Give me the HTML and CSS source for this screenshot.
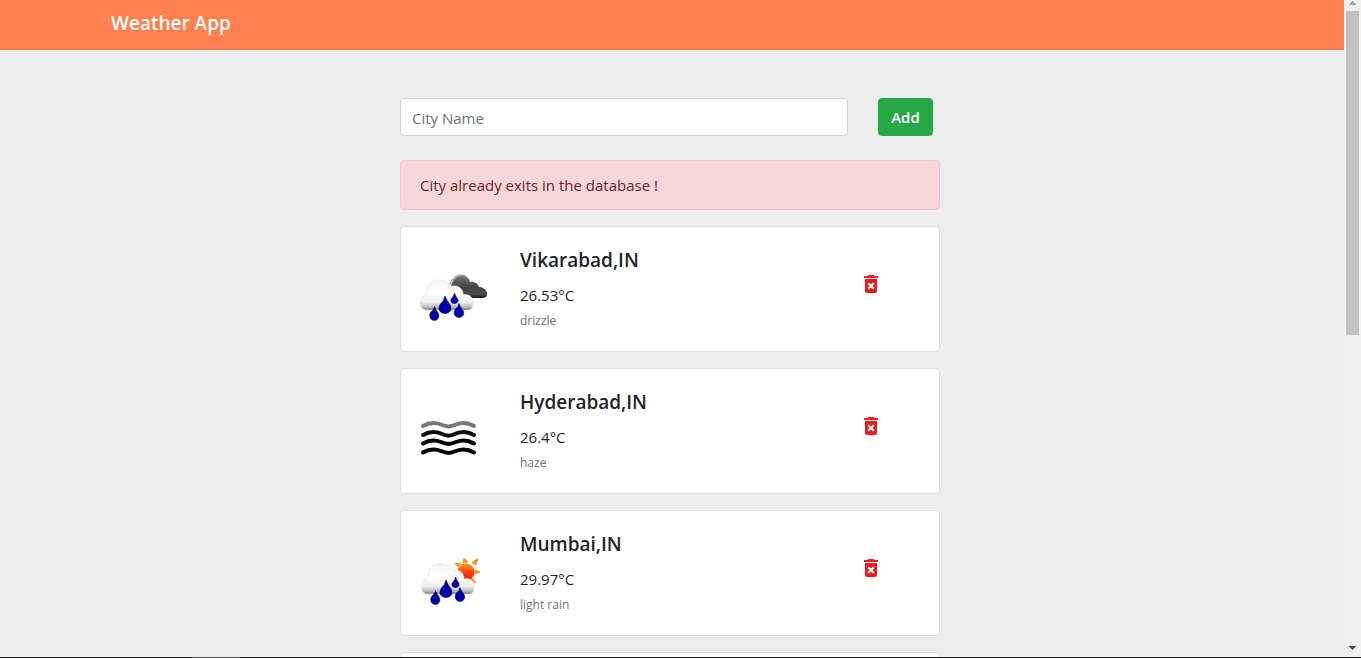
FILE: index.html
```html
<!DOCTYPE html>
<html lang="en">
<head>
<meta charset="utf-8">
<title>Weather App</title>
<link rel="stylesheet" href="styles.css">
</head>
<body>
<svg class="defs" aria-hidden="true">
  <defs>
    <linearGradient id="cloud" x1="0" y1="0" x2="0" y2="1"><stop offset="0" stop-color="#f4f4f4"/><stop offset=".45" stop-color="#fff"/><stop offset=".75" stop-color="#ededed"/><stop offset=".92" stop-color="#b4b4b4"/><stop offset="1" stop-color="#666"/></linearGradient>
    <linearGradient id="dark" x1="0" y1="0" x2="0" y2="1"><stop offset="0" stop-color="#777"/><stop offset=".5" stop-color="#444"/><stop offset=".85" stop-color="#484848"/><stop offset="1" stop-color="#111"/></linearGradient>
    <linearGradient id="sun" x1="0" y1="0" x2="0" y2="1"><stop offset="0" stop-color="#ff9a20"/><stop offset=".55" stop-color="#ff3a0a"/><stop offset="1" stop-color="#ff1000"/></linearGradient>
    <radialGradient id="drop" cx=".5" cy=".65" r=".55"><stop offset="0" stop-color="#0000d0"/><stop offset="1" stop-color="#000070"/></radialGradient>
    <filter id="soft" x="-10%" y="-10%" width="120%" height="120%"><feGaussianBlur stdDeviation=".7"/></filter>
    <g id="rain">
      <path fill="url(#cloud)" stroke="#e4e4e4" stroke-width=".6" d="M16 45C10 44 9 38 11 34C12 31 15 30 17 29C16 21 21 15 28 15C34 14 39 17 41 22C47 19 53 23 53 30C59 28 64 33 63 39C63 43 61 45 57 45Z"/>
      <g fill="url(#drop)" stroke="#000080" stroke-width=".6">
        <path d="M35 31Q37 36 39.500 39C43 44 40 48.500 35 48.500C30 48.500 27 44 30.500 39Q34 36 35 31Z"/>
        <path d="M44.500 28Q45.500 31 47 33C49.500 36 47.500 38.500 44.500 38.500C41.500 38.500 39.500 36 42 33Q44 31 44.500 28Z"/>
        <path d="M24.500 41.500Q25.500 45 27.500 47C30.500 51 28 55.500 24.500 55.500C20.500 55.500 18 51 21 47Q24 45 24.500 41.500Z"/>
        <path d="M49 38.500Q50 42 52 44C55.500 48 53 52.500 49 52.500C45 52.500 42.500 48 45.500 44Q48.500 42 49 38.500Z"/>
      </g>
    </g>
    <path id="trash" d="M6 19c0 1.100.9 2 2 2h8c1.100 0 2-.9 2-2V7H6v12zm2.460-7.120l1.410-1.410L12 12.590l2.120-2.120 1.410 1.410L13.410 14l2.120 2.120-1.410 1.410L12 15.410l-2.120 2.120-1.410-1.410L10.590 14l-2.130-2.120zM15.500 4l-1-1h-5l-1 1H5v2h14V4z"/>
  </defs>
</svg>
<div class="window">
  <div class="page">
    <header class="navbar"><a class="brand" href="#">Weather App</a></header>
    <main class="content">
      <form class="search">
        <input class="city-input" type="text" placeholder="City Name" aria-label="City Name">
        <button class="add" type="button">Add</button>
      </form>
      <div class="alert" role="alert">City already exits in the database !</div>
      <section class="cards">
        <article class="card">
          <svg class="weather" viewBox="0 0 90 65" role="img" aria-label="drizzle"><g filter="url(#soft)"><path fill="none" stroke="#aaa" stroke-width="1.500" d="M39 21C42 13 48 8 55 11"/><path fill="url(#dark)" d="M41 21C43 14 47 11 51 11C56 10 59 13 60 17C65 16 68 19 69 22C76 22 79 29 76 32L73 33H56C53 31 53 25 51 24C48 21 44 20 41 21Z"/><use href="#rain"/></g></svg>
          <div class="info"><h2 class="city">Vikarabad,IN</h2><p class="temp">26.53°C</p><p class="sky">drizzle</p></div>
          <button class="delete" type="button" aria-label="Delete Vikarabad"><svg class="bin" viewBox="0 0 24 24"><use href="#trash"/></svg></button>
        </article>
        <article class="card">
          <svg class="weather" viewBox="0 0 90 65" role="img" aria-label="haze"><g filter="url(#soft)" fill="none" stroke-width="4" stroke-linecap="round"><path stroke="#777" d="M13 19C18 16 25 15 31 17.500C37 20 40 20 46 17.500C52 15 59 16 64 19"/><path stroke="#111" d="M13 28C18 25 25 24 31 26.500C37 29.500 40 29.500 46 26.500C52 24 59 25 64 28"/><path stroke="#000" d="M13 36.500C18 33.500 25 32.500 31 35C37 37.500 40 37.500 46 35C52 32.500 59 33.500 64 36.500M13 45.500C18 42.500 25 41.500 31 44C37 46.500 40 46.500 46 44C52 41.500 59 42.500 64 45.500"/></g></svg>
          <div class="info"><h2 class="city">Hyderabad,IN</h2><p class="temp">26.4°C</p><p class="sky">haze</p></div>
          <button class="delete" type="button" aria-label="Delete Hyderabad"><svg class="bin" viewBox="0 0 24 24"><use href="#trash"/></svg></button>
        </article>
        <article class="card">
          <svg class="weather" viewBox="0 0 90 65" role="img" aria-label="light rain"><g filter="url(#soft)"><path fill="#ff9420" stroke="#ff9420" d="M54 9L58 13L53 14ZM65 11L68 10L66 16L62 14ZM45 14L51 15L48 18ZM65 21L70 23L65 25ZM62 29L66 34L60 32Z"/><circle cx="56" cy="23" r="8.500" fill="url(#sun)"/><use href="#rain" x="1"/></g></svg>
          <div class="info"><h2 class="city">Mumbai,IN</h2><p class="temp">29.97°C</p><p class="sky">light rain</p></div>
          <button class="delete" type="button" aria-label="Delete Mumbai"><svg class="bin" viewBox="0 0 24 24"><use href="#trash"/></svg></button>
        </article>
        <article class="card"></article>
      </section>
    </main>
  </div>
  <div class="scrollbar" aria-hidden="true">
    <svg class="arrow arrow-up" viewBox="0 0 7 4"><path d="M3 0h1v1h1v1h1v1h1v1H0V3h1V2h1V1h1z"/></svg>
    <div class="track"><div class="thumb"></div></div>
    <svg class="arrow" viewBox="0 0 7 4"><path d="M0 0h7v1H6v1H5v1H4v1H3V3H2V2H1V1H0z"/></svg>
  </div>
  <div class="edge" aria-hidden="true"><div class="edge-mark"></div></div>
</div>
</body>
</html>
```
FILE: styles.css
```css
* { box-sizing: border-box; }
body {
  margin: 0;
  background: #ededed;
  color: #212529;
  font-family: "Segoe UI", "Open Sans", "Noto Sans", sans-serif;
  font-size: 15px;
  line-height: 24px;
}
.defs { position: absolute; width: 0; height: 0; }
.window {
  display: grid;
  grid-template-columns: minmax(0, 1fr) 17px;
  grid-template-rows: minmax(0, 1fr) 1px;
  height: 100vh;
  overflow: hidden;
}
.page { overflow: hidden; }
.navbar {
  display: flex;
  height: 50px;
  padding: 8px 111px;
  background: #ff7f50;
}
.brand {
  color: #fff;
  font-size: 19px;
  font-weight: 600;
  line-height: 30px;
  text-decoration: none;
}
.content {
  width: 544px;
  max-width: 100%;
  margin: 0 auto;
  padding: 48px 4px 0 0;
}
.search {
  display: flex;
  gap: 30px;
  padding-right: 7px;
  margin-bottom: 24px;
}
.city-input {
  flex: 1;
  min-width: 0;
  height: 38px;
  padding: 8px 11px 6px;
  border: 1px solid #ced4da;
  border-radius: 4px;
  background: #fff;
  color: #495057;
  font: inherit;
}
.city-input::placeholder { color: #6c757d; opacity: 1; }
.add {
  width: 55px;
  height: 38px;
  padding: 0;
  border: 1px solid #28a745;
  border-radius: 4px;
  background: #28a745;
  color: #fff;
  font: inherit;
  font-weight: 600;
}
.alert {
  margin-bottom: 16px;
  padding: 12px 19px;
  border: 1px solid #f5c6cb;
  border-radius: 4px;
  background: #f8d7da;
  color: #721c24;
}
.cards { display: grid; gap: 16px; }
.card {
  display: grid;
  grid-template-columns: 90px 1fr 24px;
  column-gap: 20px;
  min-height: 126px;
  padding: 20px 56px 16px 9px;
  border: 1px solid #dfdfdf;
  border-radius: 4px;
  background: #fff;
}
.weather { width: 90px; height: 65px; margin-top: 18px; }
.city {
  margin: 0 0 10px;
  font-size: 19px;
  font-weight: 600;
  line-height: 26px;
}
.temp { margin: 0; }
.sky { margin: 0; color: #6c757d; font-size: 12px; line-height: 28px; }
.delete {
  width: 24px;
  height: 24px;
  margin-top: 25px;
  padding: 0;
  border: 0;
  background: none;
}
.bin { display: block; width: 24px; height: 24px; fill: #ed1c1c; }
.scrollbar {
  display: flex;
  flex-direction: column;
  align-items: center;
  padding: 1px 0 7px;
  background: #f0f0f0;
}
.arrow { width: 7px; height: 4px; fill: #505050; shape-rendering: crispEdges; }
.arrow-up { fill: #a3a3a3; }
.track { flex: 1; width: 13px; padding-top: 6px; }
.thumb { height: 51%; background: #c1c1c1; }
.edge { grid-column: 1 / -1; background: #222; }
.edge-mark { width: 48px; height: 1px; margin-left: 192px; background: #555; }
```
